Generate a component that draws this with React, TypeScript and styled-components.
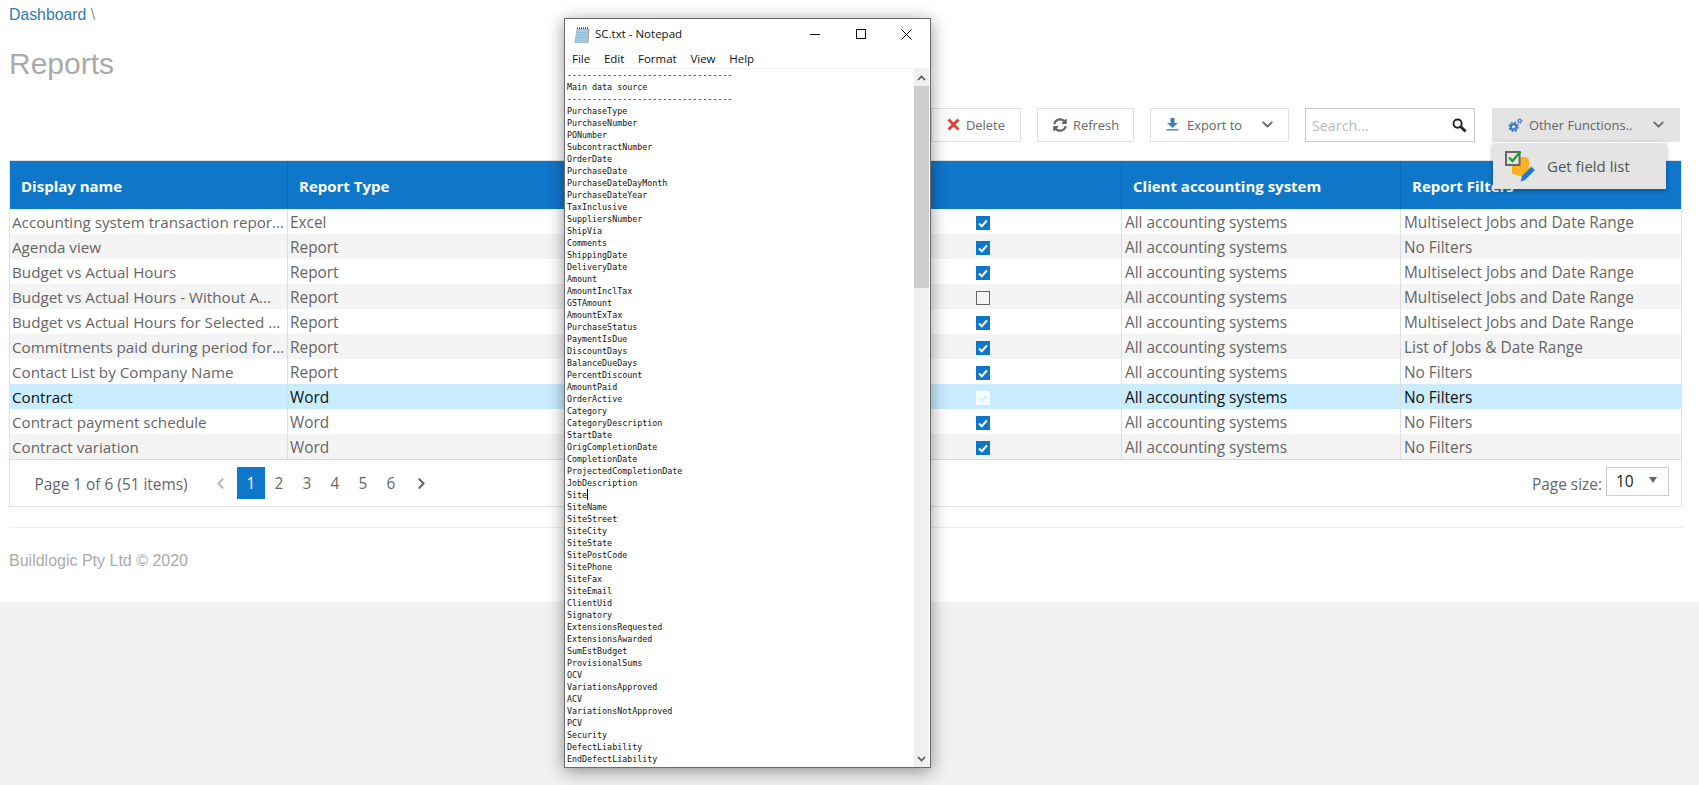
import React from 'react';
import styled, { createGlobalStyle } from 'styled-components';
import { FaSyncAlt } from 'react-icons/fa';
import { ChevronDown, ChevronLeft, ChevronRight } from 'lucide-react';

const Global = createGlobalStyle`
  html, body { margin: 0; padding: 0; background: #f1f1f1; }
  body { height: 785px; overflow: hidden; position: relative; font-family: "Open Sans", "Noto Sans", sans-serif; }
`;

const Page = styled.div`
  height: 602px; background: #fff; padding: 0 16px 0 9px; box-sizing: border-box;
`;
const Breadcrumb = styled.div`
  height: 28px; font: 15.8px/29px "Liberation Sans", Arial, sans-serif; color: #999;
  a { color: #337ab7; }
`;
const Title = styled.h1`
  margin: 11px 0 0 0; height: 50px; font: 400 30px/50px "Liberation Sans", Arial, sans-serif; color: #aaa;
`;
const Toolbar = styled.div`
  display: flex; justify-content: flex-end; gap: 16px; height: 34px; margin: 19px 3px 18px 0; position: relative;
`;
const Button = styled.div<{ $width: number; $active?: boolean }>`
  width: ${p => p.$width}px; height: 34px; box-sizing: border-box; flex: none;
  display: flex; align-items: center; padding-left: 15px; gap: 6px; padding-bottom: 1px;
  border: 1px solid ${p => (p.$active ? '#e4e4e4' : '#e0e0e0')}; background: ${p => (p.$active ? '#e4e4e4' : '#fff')};
  font-size: 12.9px; color: #666; position: relative;
`;
const ButtonChevron = styled.span`
  position: absolute; right: 12px; top: 7px; display: flex; color: #666;
`;
const SearchBox = styled.div`
  width: 170px; height: 34px; box-sizing: border-box; flex: none; margin-right: 1px;
  border: 1px solid #c9c9c9; display: flex; align-items: center; justify-content: space-between; padding: 1px 7px 0 6px;
  font-size: 14.3px; color: #bbb;
`;
const Menu = styled.div`
  position: absolute; left: 0; top: 33px; width: 173px; height: 47px; box-sizing: border-box; z-index: 3;
  background: #e4e4e4; border-top: 1px solid #fff; box-shadow: 0 2px 5px rgba(0,0,0,.3);
  display: flex; align-items: center; gap: 9px; padding-left: 11px;
  font-size: 15px; color: #555;
`;
const Grid = styled.div`
  border: 1px solid #e2e2e2; width: 1673px; box-sizing: border-box;
`;
const columns = '278px 556px 278px 279px 280px';
const HeaderRow = styled.div`
  display: grid; grid-template-columns: ${columns}; height: 48px; background: #0f77c9;
`;
const HeaderCell = styled.div`
  display: flex; align-items: center; padding: 1px 0 0 11px; box-sizing: border-box;
  border-right: 1px solid #0c69b2; color: #fff; font-weight: 700; font-size: 15px;
  &:last-child { border-right: 0; }
`;
const Row = styled.div<{ $tone: 'plain' | 'alt' | 'selected' }>`
  display: grid; grid-template-columns: ${columns}; height: 25px;
  background: ${p => (p.$tone === 'selected' ? '#c9edff' : p.$tone === 'alt' ? '#f4f4f4' : '#fff')};
  color: ${p => (p.$tone === 'selected' ? '#111' : '#666')};
`;
const Cell = styled.div<{ $name?: boolean; $tight?: boolean }>`
  border-right: 1px solid #dedede; box-sizing: border-box; line-height: 25px; white-space: nowrap;
  padding: 1px 0 0 ${p => (p.$name || p.$tight ? '2px' : '3px')};
  font-size: ${p => (p.$name ? '15.2px' : '15.4px')};
  &:last-child { border-right: 0; }
`;
const CheckCell = styled.div`
  border-right: 1px solid #dedede; box-sizing: border-box; display: flex; justify-content: center; padding-top: 7px;
`;
const Box = styled.span<{ $state: 'on' | 'off' | 'muted' }>`
  width: 14px; height: 14px; box-sizing: border-box; display: flex; align-items: center; justify-content: center;
  background: ${p => (p.$state === 'on' ? '#0f77c9' : p.$state === 'muted' ? '#f6fcff' : 'transparent')};
  border: ${p => (p.$state === 'off' ? '1px solid #666' : '0')};
`;
const Pager = styled.div`
  height: 47px; box-sizing: border-box; border-top: 1px solid #d8d8d8; display: flex; align-items: flex-start; padding: 7px 12px 0 24.5px;
  font-size: 15.4px; color: #666;
`;
const PagerInfo = styled.span`
  width: 171.5px; margin-top: 6px; line-height: 24px; flex: none;
`;
const PageLink = styled.span<{ $current?: boolean; $arrow?: 'prev' | 'next' }>`
  width: 28px; height: 32px; display: flex; align-items: center; justify-content: center; flex: none;
  background: ${p => (p.$current ? '#0f77c9' : 'transparent')}; color: ${p => (p.$current ? '#fff' : p.$arrow === 'prev' ? '#bbb' : '#666')};
  margin: ${p => (p.$arrow === 'prev' ? '0 3px 0 0' : p.$arrow === 'next' ? '0 0 0 2px' : '0')};
`;
const PageSize = styled.div`
  margin-left: auto; display: flex; align-items: flex-start; gap: 4px;
`;
const PageSizeLabel = styled.span`
  line-height: 24px; margin-top: 6px;
`;
const Select = styled.div`
  width: 63px; height: 29px; box-sizing: border-box; border: 1px solid #ccc; position: relative;
  padding-left: 9px; line-height: 26px; font-size: 15.5px; color: #222;
  &::after { content: ''; position: absolute; right: 11px; top: 9px; border: 4px solid transparent; border-top: 6px solid #666; border-bottom: 0; }
`;
const Footer = styled.div`
  margin-top: 20px; border-top: 1px solid #eee; width: 1674px; box-sizing: border-box;
  font: 16px/20px "Liberation Sans", Arial, sans-serif; color: #aaa; padding-top: 23px;
`;
const Notepad = styled.div`
  position: absolute; left: 564px; top: 18px; width: 367px; height: 750px; box-sizing: border-box;
  border: 1px solid #6b6b6b; background: #fff; box-shadow: 0 3px 16px rgba(0,0,0,.42); z-index: 5;
  display: flex; flex-direction: column; overflow: hidden;
`;
const TitleBar = styled.div`
  height: 30px; flex: none; display: flex; align-items: center; padding: 0 1px 0 9px; color: #111; font-size: 11.5px;
`;
const WindowTitle = styled.span`
  margin-left: 5px; flex: 1; padding-bottom: 1px;
`;
const WindowButton = styled.span`
  width: 45.5px; height: 30px; display: flex; align-items: center; justify-content: center; flex: none;
`;
const MenuBar = styled.div`
  height: 20px; flex: none; display: flex; align-items: center; gap: 13.7px; padding-left: 7px; font-size: 11.5px; color: #111;
  border-bottom: 1px solid #f2f2f2; box-sizing: border-box;
`;
const Editor = styled.div`
  flex: 1; display: flex; min-height: 0;
`;
const TextArea = styled.pre`
  flex: 1; margin: 0; padding-left: 2px;
  font: 8.33px/12px "DejaVu Sans Mono", "Liberation Mono", monospace; color: #111;
`;
const Caret = styled.span`
  display: inline-block; width: 1px; height: 11px; background: #000; vertical-align: -2px;
`;
const ScrollBar = styled.div`
  width: 15px; margin-right: 1px; flex: none; background: #f0f0f0; display: flex; flex-direction: column; align-items: center; color: #555;
`;
const ScrollArrow = styled.span<{ $end?: boolean }>`
  height: 17px; display: flex; align-items: center; justify-content: center; flex: none; margin-top: ${p => (p.$end ? 'auto' : '0')};
`;
const ScrollThumb = styled.div`
  width: 15px; height: 202px; background: #cdcdcd; flex: none;
`;

const rows: [string, string, 'on' | 'off' | 'muted', string][] = [
  ['Accounting system transaction repor...', 'Excel', 'on', 'Multiselect Jobs and Date Range'],
  ['Agenda view', 'Report', 'on', 'No Filters'],
  ['Budget vs Actual Hours', 'Report', 'on', 'Multiselect Jobs and Date Range'],
  ['Budget vs Actual Hours - Without A...', 'Report', 'off', 'Multiselect Jobs and Date Range'],
  ['Budget vs Actual Hours for Selected ...', 'Report', 'on', 'Multiselect Jobs and Date Range'],
  ['Commitments paid during period for...', 'Report', 'on', 'List of Jobs & Date Range'],
  ['Contact List by Company Name', 'Report', 'on', 'No Filters'],
  ['Contract', 'Word', 'muted', 'No Filters'],
  ['Contract payment schedule', 'Word', 'on', 'No Filters'],
  ['Contract variation', 'Word', 'on', 'No Filters'],
];

const before = `---------------------------------
Main data source
---------------------------------
PurchaseType
PurchaseNumber
PONumber
SubcontractNumber
OrderDate
PurchaseDate
PurchaseDateDayMonth
PurchaseDateYear
TaxInclusive
SuppliersNumber
ShipVia
Comments
ShippingDate
DeliveryDate
Amount
AmountInclTax
GSTAmount
AmountExTax
PurchaseStatus
PaymentIsDue
DiscountDays
BalanceDueDays
PercentDiscount
AmountPaid
OrderActive
Category
CategoryDescription
StartDate
OrigCompletionDate
CompletionDate
ProjectedCompletionDate
JobDescription
Site`;
const after = `
SiteName
SiteStreet
SiteCity
SiteState
SitePostCode
SitePhone
SiteFax
SiteEmail
ClientUid
Signatory
ExtensionsRequested
ExtensionsAwarded
SumEstBudget
ProvisionalSums
OCV
VariationsApproved
ACV
VariationsNotApproved
PCV
Security
DefectLiability
EndDefectLiability`;

const Check = ({ color }: { color: string }) => (
  <svg width="10" height="9" viewBox="0 0 10 9"><path d="M1 4.6 3.8 7.2 9 1.4" fill="none" stroke={color} strokeWidth="2.1" /></svg>
);
const Cross = () => (
  <svg width="13" height="13" viewBox="0 0 13 13"><path d="M1.5 1.5 11.5 11.5M11.5 1.5 1.5 11.5" stroke="#e24141" strokeWidth="3" /></svg>
);
const ExportIcon = () => (
  <svg width="13" height="13" viewBox="0 0 13 13" fill="#3f7fc4"><path d="M4.5 0h4v5H12L6.5 10 1 5h3.5z" /><rect x="0.5" y="11" width="12" height="1.6" fill="#5b8fc7" /></svg>
);
const Gears = () => (
  <svg width="15" height="14" viewBox="0 0 16 15" fill="none" stroke="#3f7bb8">
    <circle cx="6" cy="9.5" r="3" strokeWidth="2.4" />
    <circle cx="6" cy="9.5" r="4.9" strokeWidth="1.6" strokeDasharray="2 1.85" />
    <circle cx="12.5" cy="3.2" r="1.6" strokeWidth="1.3" />
    <circle cx="12.5" cy="3.2" r="2.6" strokeWidth="1" strokeDasharray="1.2 1.2" />
  </svg>
);
const FieldListIcon = () => (
  <svg width="34" height="34" viewBox="0 0 34 34">
    <path d="M8 18V8h14l3 2.5V20l-6 7h-4l-7-2.5z" fill="#fdb022" />
    <rect x="2" y="3" width="13.5" height="13" fill="#e4e4e4" stroke="#666" strokeWidth="2" />
    <path d="M5 8.5 8.5 12 16.5 2.5" fill="none" stroke="#17a03c" strokeWidth="2.4" />
    <path d="M19 29.5 29.5 19" stroke="#1f77d0" strokeWidth="5" />
    <path d="M16.5 32.5 18 28 21 31z" fill="#1f77d0" />
    <path d="M27.5 17.5 31.5 21.5" stroke="#e4e4e4" strokeWidth="1" />
  </svg>
);
const SearchIcon = () => (
  <svg width="15" height="15" viewBox="0 0 15 15" fill="none" stroke="#222"><circle cx="5.6" cy="5.6" r="4.1" strokeWidth="1.9" /><path d="M8.8 8.8 13.6 13.6" strokeWidth="2.8" /></svg>
);
const NotepadIcon = () => (
  <svg width="16" height="17" viewBox="0 0 16 17">
    <path d="M3 3h12l-1 13.5H0.8z" fill="#a9cde6" stroke="#7ea9c6" strokeWidth=".6" />
    <path d="M14.6 3.4 13.8 16.6" stroke="#b7a888" strokeWidth="1.1" />
    <path d="M3 6.5h10M2.7 9h10M2.3 11.5h10.2M2 14h10.2" stroke="#7fb2d6" strokeWidth=".7" />
    <path d="M3.5 3V1.4M5.5 3V1.4M7.5 3V1.4M9.5 3V1.4M11.5 3V1.4M13.5 3V1.4" stroke="#444" strokeWidth="1" />
  </svg>
);

export default function App() {
  return (
    <>
      <Global />
      <Page>
        <Breadcrumb><a>Dashboard</a> \</Breadcrumb>
        <Title>Reports</Title>
        <Toolbar>
          <Button $width={90}><Cross /><span>Delete</span></Button>
          <Button $width={97}><FaSyncAlt size={14} color="#666" /><span>Refresh</span></Button>
          <Button $width={139}><ExportIcon /><span style={{ marginLeft: 2 }}>Export to</span><ButtonChevron><ChevronDown size={17} strokeWidth={2.6} /></ButtonChevron></Button>
          <SearchBox>Search...<SearchIcon /></SearchBox>
          <Button $width={188} $active>
            <Gears /><span>Other Functions..</span><ButtonChevron><ChevronDown size={17} strokeWidth={2.6} /></ButtonChevron>
            <Menu><FieldListIcon /><span>Get field list</span></Menu>
          </Button>
        </Toolbar>
        <Grid>
          <HeaderRow>
            <HeaderCell>Display name</HeaderCell>
            <HeaderCell>Report Type</HeaderCell>
            <HeaderCell />
            <HeaderCell>Client accounting system</HeaderCell>
            <HeaderCell>Report Filters</HeaderCell>
          </HeaderRow>
          {rows.map(([name, type, state, filters], i) => (
            <Row key={name} $tone={state === 'muted' ? 'selected' : i % 2 ? 'alt' : 'plain'}>
              <Cell $name>{name}</Cell>
              <Cell $tight>{type}</Cell>
              <CheckCell>
                <Box $state={state}>{state !== 'off' && <Check color={state === 'on' ? '#fff' : '#d4efff'} />}</Box>
              </CheckCell>
              <Cell>All accounting systems</Cell>
              <Cell>{filters}</Cell>
            </Row>
          ))}
          <Pager>
            <PagerInfo>Page 1 of 6 (51 items)</PagerInfo>
            <PageLink $arrow="prev"><ChevronLeft size={17} strokeWidth={3} /></PageLink>
            <PageLink $current>1</PageLink>
            {[2, 3, 4, 5, 6].map(n => <PageLink key={n}>{n}</PageLink>)}
            <PageLink $arrow="next"><ChevronRight size={17} strokeWidth={3} /></PageLink>
            <PageSize>
              <PageSizeLabel>Page size:</PageSizeLabel>
              <Select>10</Select>
            </PageSize>
          </Pager>
        </Grid>
        <Footer>Buildlogic Pty Ltd © 2020</Footer>
      </Page>
      <Notepad>
        <TitleBar>
          <NotepadIcon />
          <WindowTitle>SC.txt - Notepad</WindowTitle>
          <WindowButton><svg width="10" height="10" viewBox="0 0 10 10"><path d="M0 5.5h10" stroke="#111" /></svg></WindowButton>
          <WindowButton><svg width="10" height="10" viewBox="0 0 10 10"><rect x=".5" y=".5" width="9" height="9" fill="none" stroke="#111" /></svg></WindowButton>
          <WindowButton><svg width="11" height="11" viewBox="0 0 11 11"><path d="M.5.5l10 10M10.5.5l-10 10" stroke="#111" /></svg></WindowButton>
        </TitleBar>
        <MenuBar><span>File</span><span>Edit</span><span>Format</span><span>View</span><span>Help</span></MenuBar>
        <Editor>
          <TextArea>{before}<Caret />{after}</TextArea>
          <ScrollBar>
            <ScrollArrow><svg width="9" height="6" viewBox="0 0 9 6"><path d="M1 5l3.5-3.5L8 5" fill="none" stroke="#555" strokeWidth="1.6" /></svg></ScrollArrow>
            <ScrollThumb />
            <ScrollArrow $end><svg width="9" height="6" viewBox="0 0 9 6"><path d="M1 1l3.5 3.5L8 1" fill="none" stroke="#555" strokeWidth="1.6" /></svg></ScrollArrow>
          </ScrollBar>
        </Editor>
      </Notepad>
    </>
  );
}
